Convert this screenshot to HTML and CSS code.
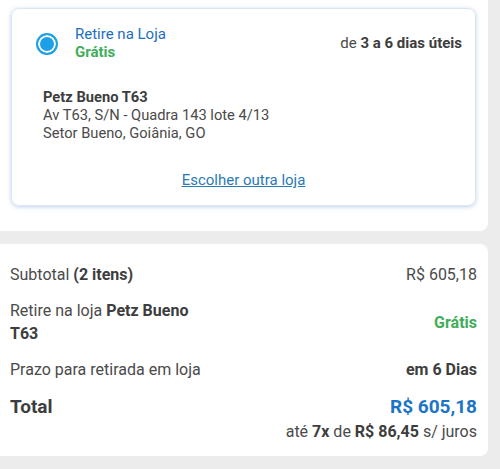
FILE: index.html
```html
<html>

<head>
  <title>Resumo do pedido</title>
  <meta charset="UTF-8">
  <meta name="viewport" content="width=device-width, initial-scale=1.0">
  <link rel="stylesheet" href="styles.css">
</head>

<body>
  <div class="panel panel-delivery">
    <div class="store-card">
      <div class="store-head">
        <span class="radio"></span>
        <div class="store-option">
          <div class="option-title">Retire na Loja</div>
          <div class="option-price">Grátis</div>
        </div>
        <div class="store-eta">de <b>3 a 6 dias úteis</b></div>
      </div>

      <div class="store-address">
        <div class="store-name">Petz Bueno T63</div>
        <div>Av T63, S/N - Quadra 143 lote 4/13</div>
        <div>Setor Bueno, Goiânia, GO</div>
      </div>

      <div class="store-change">
        <a href="#">Escolher outra loja</a>
      </div>
    </div>
  </div>

  <div class="panel panel-summary">
    <div class="summary-row">
      <span>Subtotal <b>(2 itens)</b></span>
      <span>R$ 605,18</span>
    </div>
    <div class="summary-row">
      <span class="pickup-label">Retire na loja <b>Petz Bueno</b> <b>T63</b></span>
      <span class="free">Grátis</span>
    </div>
    <div class="summary-row">
      <span>Prazo para retirada em loja</span>
      <b>em 6 Dias</b>
    </div>
    <div class="summary-row row-total">
      <span>Total</span>
      <span class="total-value">R$ 605,18</span>
    </div>
    <div class="installments">até <b>7x</b> de <b>R$ 86,45</b> s/ juros</div>
  </div>
</body>

</html>
```

FILE: styles.css
```css
* {
  box-sizing: border-box;
}

body {
  margin: 0;
  background-color: #ececec;
  font-family: Roboto, 'Liberation Sans', sans-serif;
  font-size: 15px;
  color: #4a4a4a;
}

b {
  font-weight: bold;
  color: #3d3d3d;
}

.panel {
  width: 488px;
  background-color: #fff;
}

.panel-delivery {
  padding: 8px 12px 25px 11px;
  border-bottom-right-radius: 8px;
}

.store-card {
  height: 198px;
  border: 1px solid #dbe6f4;
  border-radius: 8px;
  box-shadow: 0 1px 4px rgba(70, 120, 200, 0.35);
  padding: 16px 13px 0 13px;
}

.store-head {
  display: flex;
  align-items: flex-start;
  padding-left: 11px;
}

.radio {
  width: 22px;
  height: 22px;
  margin-top: 8px;
  border-radius: 50%;
  border: 2px solid #1ea0e8;
  background-color: #1ea0e8;
  box-shadow: inset 0 0 0 2px #fff;
}

.store-option {
  flex: 1;
  margin-left: 17px;
  line-height: 18px;
}

.option-title {
  color: #1c6fbf;
}

.option-price {
  font-weight: bold;
  color: #3fae5a;
}

.store-eta {
  margin-top: 9px;
  line-height: 18px;
}

.store-address {
  margin-top: 27px;
  padding-left: 18px;
  line-height: 18px;
  font-size: 14.7px;
}

.store-name {
  font-weight: bold;
  color: #3d3d3d;
}

.store-change {
  margin-top: 29px;
  text-align: center;
}

.store-change a {
  color: #2a7ab6;
  line-height: 18px;
}

.panel-summary {
  margin-top: 13px;
  padding: 19px 11px 14px 10px;
  font-size: 16px;
  border-top-right-radius: 8px;
  border-bottom-right-radius: 8px;
}

.summary-row {
  display: flex;
  justify-content: space-between;
  align-items: center;
  line-height: 23px;
  margin-bottom: 13px;
}

.pickup-label {
  width: 190px;
}

.free {
  font-weight: bold;
  color: #3fae5a;
}

.row-total {
  line-height: 26px;
  font-size: 19px;
  font-weight: bold;
  color: #3d3d3d;
  margin-top: 2px;
  margin-bottom: 2px;
}

.total-value {
  font-size: 19px;
  color: #1c75c4;
}

.installments {
  text-align: right;
  line-height: 20px;
}
```
